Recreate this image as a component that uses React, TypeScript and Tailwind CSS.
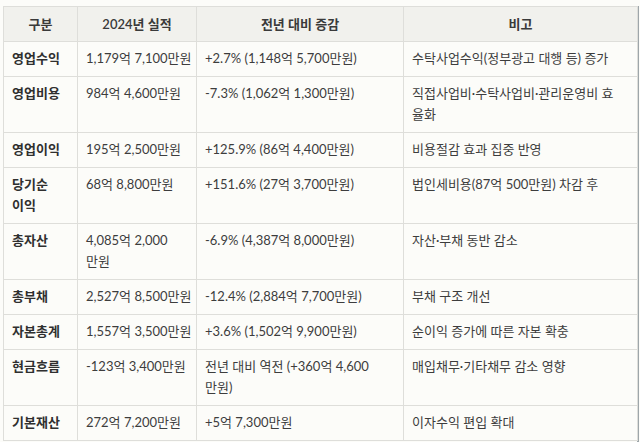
import React from "react";

const rows: { k: React.ReactNode; a: React.ReactNode; b: React.ReactNode; c: React.ReactNode; tall?: boolean }[] = [
  { k: "영업수익", a: "1,179억 7,100만원", b: "+2.7% (1,148억 5,700만원)", c: "수탁사업수익(정부광고 대행 등) 증가" },
  { k: "영업비용", a: "984억 4,600만원", b: "-7.3% (1,062억 1,300만원)", c: <>직접사업비·수탁사업비·관리운영비 효<br />율화</>, tall: true },
  { k: "영업이익", a: "195억 2,500만원", b: "+125.9% (86억 4,400만원)", c: "비용절감 효과 집중 반영" },
  { k: <>당기순<br />이익</>, a: "68억 8,800만원", b: "+151.6% (27억 3,700만원)", c: "법인세비용(87억 500만원) 차감 후", tall: true },
  { k: "총자산", a: <>4,085억 2,000<br />만원</>, b: "-6.9% (4,387억 8,000만원)", c: "자산·부채 동반 감소", tall: true },
  { k: "총부채", a: "2,527억 8,500만원", b: "-12.4% (2,884억 7,700만원)", c: "부채 구조 개선" },
  { k: "자본총계", a: "1,557억 3,500만원", b: "+3.6% (1,502억 9,900만원)", c: "순이익 증가에 따른 자본 확충" },
  { k: "현금흐름", a: "-123억 3,400만원", b: <>전년 대비 역전 (+360억 4,600<br />만원)</>, c: "매입채무·기타채무 감소 영향", tall: true },
  { k: "기본재산", a: "272억 7,200만원", b: "+5억 7,300만원", c: "이자수익 편입 확대" },
];

export default function App() {
  const font = { fontFamily: 'Lato, "Noto Sans CJK KR", sans-serif' };
  const cell = "border border-[#dededa] align-top px-2 pt-[6px] pb-0";
  return (
    <div className="w-[640px] h-[442px] bg-[#fcfcf9] overflow-hidden" style={font}>
      <div className="pt-[6px] pl-[3px]">
        <div className="w-[636px] border-r-2 border-[#9ea6aa] h-[436px]">
          <table className="table-fixed border-collapse w-[634px] text-[13px] leading-[21px] text-[#3d3d3d]">
            <colgroup>
              <col className="w-[74px]" />
              <col className="w-[119px]" />
              <col className="w-[207px]" />
              <col className="w-[234px]" />
            </colgroup>
            <thead>
              <tr className="bg-[#f1f1ed] h-[35px]">
                {["구분", "2024년 실적", "전년 대비 증감", "비고"].map((h) => (
                  <th key={h} className="border border-[#dededa] p-0 px-2 font-semibold text-center text-[#3a3a3a]">
                    {h}
                  </th>
                ))}
              </tr>
            </thead>
            <tbody>
              {rows.map((r, i) => (
                <tr key={i} className={r.tall ? "h-[56px]" : "h-[35px]"}>
                  <td className={`${cell} font-bold text-[#2f2f2f]`}>{r.k}</td>
                  <td className={`${cell} whitespace-nowrap`}>{r.a}</td>
                  <td className={cell}>{r.b}</td>
                  <td className={cell}>{r.c}</td>
                </tr>
              ))}
            </tbody>
          </table>
        </div>
      </div>
    </div>
  );
}
